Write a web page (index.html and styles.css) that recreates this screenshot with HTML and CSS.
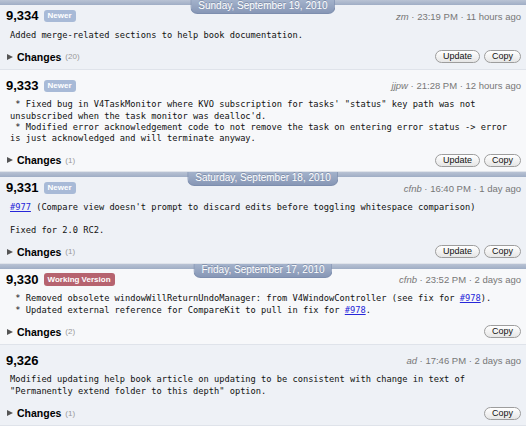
FILE: index.html
```html
<!DOCTYPE html>
<html>
<head>
<meta charset="utf-8">
<link rel="stylesheet" href="styles.css">
</head>
<body>
<div class="list">
  <div class="day"><span class="day-label">Sunday, September 19, 2010</span></div>
  <div class="entry alt">
    <div class="head"><span class="rev">9,334</span><span class="badge">Newer</span><span class="meta"><i>zm</i> · 23:19 PM · 11 hours ago</span></div>
    <pre class="msg">Added merge-related sections to help book documentation.</pre>
    <div class="foot"><span class="tri"></span><span class="changes">Changes</span><span class="count">(20)</span><span class="btns"><button class="btn">Update</button><button class="btn">Copy</button></span></div>
  </div>
  <div class="entry">
    <div class="head"><span class="rev">9,333</span><span class="badge">Newer</span><span class="meta"><i>jjpw</i> · 21:28 PM · 12 hours ago</span></div>
    <pre class="msg"> * Fixed bug in V4TaskMonitor where KVO subscription for tasks' "status" key path was not
unsubscribed when the task monitor was dealloc'd.
 * Modified error acknowledgement code to not remove the task on entering error status -&gt; error
is just acknowledged and will terminate anyway.</pre>
    <div class="foot"><span class="tri"></span><span class="changes">Changes</span><span class="count">(1)</span><span class="btns"><button class="btn">Update</button><button class="btn">Copy</button></span></div>
  </div>
  <div class="day"><span class="day-label">Saturday, September 18, 2010</span></div>
  <div class="entry alt">
    <div class="head"><span class="rev">9,331</span><span class="badge">Newer</span><span class="meta"><i>cfnb</i> · 16:40 PM · 1 day ago</span></div>
    <pre class="msg"><a href="#">#977</a> (Compare view doesn't prompt to discard edits before toggling whitespace comparison)

Fixed for 2.0 RC2.</pre>
    <div class="foot"><span class="tri"></span><span class="changes">Changes</span><span class="count">(1)</span><span class="btns"><button class="btn">Update</button><button class="btn">Copy</button></span></div>
  </div>
  <div class="day"><span class="day-label">Friday, September 17, 2010</span></div>
  <div class="entry">
    <div class="head"><span class="rev">9,330</span><span class="badge working">Working Version</span><span class="meta"><i>cfnb</i> · 23:52 PM · 2 days ago</span></div>
    <pre class="msg"> * Removed obsolete windowWillReturnUndoManager: from V4WindowController (see fix for <a href="#">#978</a>).
 * Updated external reference for CompareKit to pull in fix for <a href="#">#978</a>.</pre>
    <div class="foot"><span class="tri"></span><span class="changes">Changes</span><span class="count">(2)</span><span class="btns"><button class="btn">Copy</button></span></div>
  </div>
  <div class="entry alt">
    <div class="head"><span class="rev">9,326</span><span class="meta"><i>ad</i> · 17:46 PM · 2 days ago</span></div>
    <pre class="msg">Modified updating help book article on updating to be consistent with change in text of
"Permanently extend folder to this depth" option.</pre>
    <div class="foot"><span class="tri"></span><span class="changes">Changes</span><span class="count">(1)</span><span class="btns"><button class="btn">Copy</button></span></div>
  </div>
</div>
</body>
</html>
```
FILE: styles.css
```css
html, body {
  margin: 0;
  padding: 0;
  background: #f7f8fa;
  font-family: "Liberation Sans", Arial, sans-serif;
  color: #000;
}
.list {
  display: flex;
  flex-direction: column;
}
.day {
  position: relative;
  height: 5px;
  background: linear-gradient(#b9c3d4, #9fadc5);
}
.day-label {
  position: absolute;
  top: 0;
  left: 50%;
  transform: translateX(-50%);
  z-index: 2;
  height: 13px;
  line-height: 12px;
  padding: 0 7px;
  white-space: nowrap;
  font-size: 10px;
  color: #fff;
  text-shadow: 0 -1px 0 rgba(60, 75, 105, 0.35);
  background: linear-gradient(#a3b2cb, #8797b6);
  border: 1px solid #7d8eae;
  border-top: none;
  border-radius: 0 0 7px 7px;
}
.entry {
  position: relative;
  padding: 9px 5px 5px 6px;
  background: #f7f8fa;
  border-bottom: 1px solid #dfe3ea;
}
.entry.alt {
  background: #eef1f6;
}
.entry:has(+ .day) {
  padding-bottom: 4px;
}
.day + .entry {
  padding-top: 4px;
}
.head {
  display: flex;
  align-items: center;
  height: 14px;
}
.rev {
  font-size: 13px;
  font-weight: bold;
  line-height: 14px;
}
.badge {
  margin-left: 5px;
  height: 12px;
  line-height: 12px;
  padding: 0 4px;
  border-radius: 3px;
  background: #a8bad7;
  color: #fff;
  font-size: 8px;
  font-weight: bold;
}
.badge.working {
  height: 13px;
  line-height: 13px;
  background: #b6636f;
}
.meta {
  margin-left: auto;
  font-size: 9.5px;
  color: #777;
}
.msg {
  margin: 6.5px 0 0 4px;
  font-family: "DejaVu Sans Mono", "Liberation Mono", monospace;
  font-size: 8.7px;
  line-height: 11.3px;
  color: #111;
  white-space: pre;
}
.msg a {
  color: #2727d9;
  text-decoration: underline;
}
.foot {
  display: flex;
  align-items: center;
  height: 14px;
  margin-top: 9px;
}
.tri {
  width: 0;
  height: 0;
  margin-left: 1px;
  border-top: 3.5px solid transparent;
  border-bottom: 3.5px solid transparent;
  border-left: 6px solid #555;
}
.changes {
  margin-left: 4px;
  font-size: 10.5px;
  font-weight: bold;
}
.count {
  margin-left: 4px;
  font-size: 8px;
  color: #999;
}
.btns {
  margin-left: auto;
  display: flex;
  gap: 4px;
}
.btn {
  height: 13px;
  padding: 0 7px;
  margin: 0;
  font-family: "Liberation Sans", Arial, sans-serif;
  font-size: 9px;
  line-height: 11px;
  color: #111;
  background: linear-gradient(#ffffff, #e6e6e6);
  border: 1px solid #9d9d9d;
  border-radius: 7px;
}
```
